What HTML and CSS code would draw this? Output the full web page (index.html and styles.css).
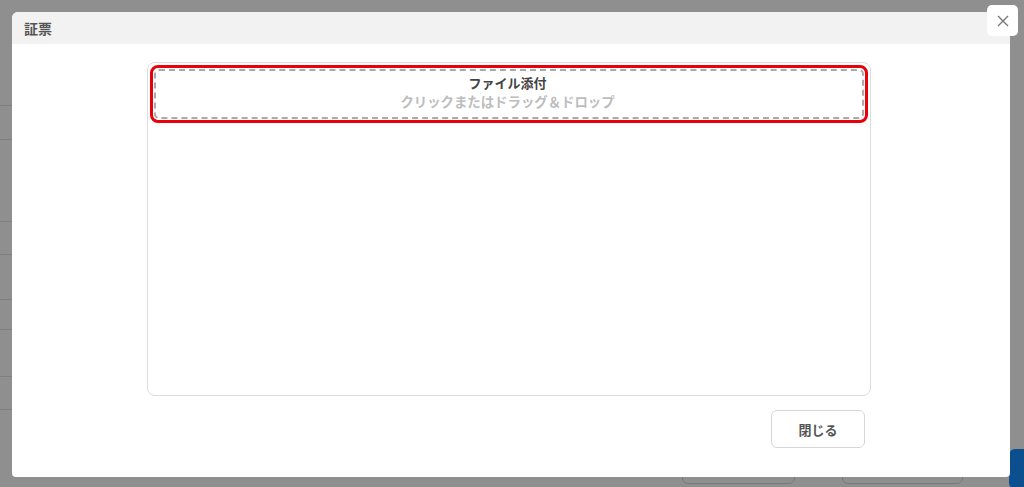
FILE: index.html
```html
<!DOCTYPE html>
<html lang="ja">

<head>
    <meta charset="UTF-8">
    <meta name="viewport" content="width=device-width, initial-scale=1.0">
    <title>証票</title>
    <link rel="stylesheet" href="styles.css">
</head>

<body>
    <!-- 背景の一覧画面 (オーバーレイ越し) -->
    <div class="backdrop">
        <div class="rows">
            <div class="row" style="height: 106px"></div>
            <div class="row" style="height: 34px"></div>
            <div class="row" style="height: 82px"></div>
            <div class="row" style="height: 33px"></div>
            <div class="row" style="height: 45px"></div>
            <div class="row" style="height: 30px"></div>
            <div class="row" style="height: 47px"></div>
            <div class="row" style="height: 33px"></div>
        </div>
        <div class="bg-actions">
            <span class="bg-btn bg-btn-a"></span>
            <span class="bg-btn bg-btn-b"></span>
            <span class="bg-btn-primary"></span>
        </div>
    </div>

    <div class="modal">
        <div class="modal-header">証票</div>
        <div class="modal-body">
            <div class="file-box">
                <div class="dropzone-focus">
                    <div class="dropzone">
                        <div class="dz-title">ファイル添付</div>
                        <div class="dz-hint">クリックまたはドラッグ＆ドロップ</div>
                    </div>
                </div>
            </div>
            <div class="modal-footer">
                <button class="btn-close">閉じる</button>
            </div>
        </div>
    </div>

    <button class="modal-x" aria-label="閉じる">
        <svg width="12" height="12" viewBox="0 0 12 12">
            <path d="M1 1 L11 11 M11 1 L1 11" stroke="#777" stroke-width="1.4" fill="none" />
        </svg>
    </button>
</body>

</html>
```

FILE: styles.css
```css
* {
    box-sizing: border-box;
}

body {
    margin: 0;
    height: 487px;
    overflow: hidden;
    background-color: #8f8f8f;
    font-family: "Noto Sans CJK JP", "Noto Sans", sans-serif;
}

.backdrop {
    position: relative;
    height: 487px;
}

.rows {
    width: 40px;
}

.row {
    border-bottom: 1px solid #7f7f7f;
}

.bg-actions {
    position: absolute;
    left: 682px;
    top: 455px;
    right: 0;
    display: flex;
    gap: 47px;
}

.bg-btn {
    height: 29px;
    border: 1px solid #7a7a7a;
    border-radius: 6px;
}

.bg-btn-a {
    width: 113px;
}

.bg-btn-b {
    width: 121px;
}

.bg-btn-primary {
    position: absolute;
    left: 327px;
    top: -6px;
    width: 40px;
    height: 40px;
    background-color: #0b4f8e;
    border-radius: 6px;
}

.modal {
    position: absolute;
    left: 12px;
    top: 12px;
    width: 998px;
    height: 465px;
    background-color: white;
    border-radius: 6px 6px 4px 4px;
    overflow: hidden;
}

.modal-header {
    height: 32px;
    line-height: 32px;
    padding-left: 12px;
    background-color: #f2f2f2;
    color: #555;
    font-size: 14px;
    font-weight: bold;
}

.modal-body {
    padding: 18px 139px 0 135px;
}

.file-box {
    height: 334px;
    border: 1px solid #dcdcdc;
    border-radius: 8px;
    padding: 2px;
}

.dropzone-focus {
    border: 3px solid #e8000b;
    border-radius: 8px;
    padding: 1px;
}

.dropzone {
    border: 2px dashed #aaa;
    border-radius: 5px;
    padding: 3px 0 7px;
    text-align: center;
    font-size: 13px;
    line-height: 18px;
    font-weight: bold;
}

.dz-title {
    color: #444;
    padding-right: 3px;
}

.dz-hint {
    color: #bdbdbd;
    font-size: 13.4px;
    padding-right: 3px;
}

.modal-footer {
    display: flex;
    justify-content: flex-end;
    padding: 14px 6px 0 0;
}

.btn-close {
    width: 94px;
    height: 38px;
    background-color: white;
    border: 1px solid #d6d6d6;
    border-radius: 6px;
    color: #555;
    font-family: inherit;
    font-size: 13px;
    font-weight: bold;
}

.modal-x {
    position: absolute;
    left: 987px;
    top: 5px;
    width: 31px;
    height: 31px;
    padding: 0;
    display: flex;
    align-items: center;
    justify-content: center;
    background-color: white;
    border: none;
    border-radius: 5px;
}
```
